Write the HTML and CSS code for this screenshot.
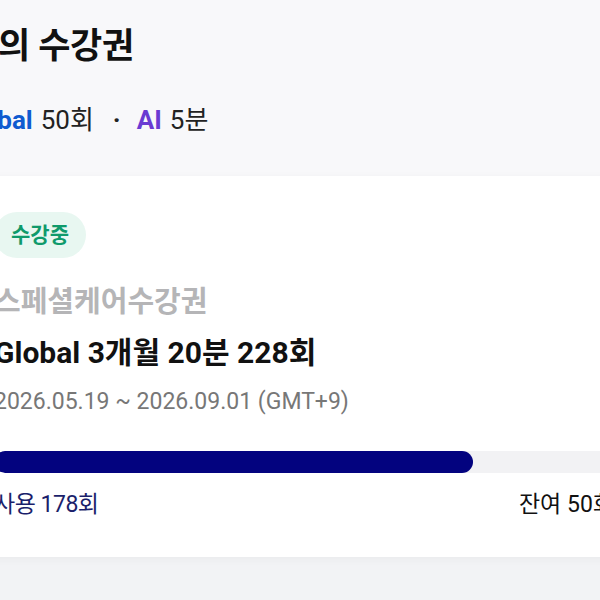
FILE: index.html
```html
<!DOCTYPE html>
<html lang="ko">
<head>
<meta charset="utf-8">
<link rel="stylesheet" href="styles.css">
</head>
<body>
<div class="page">
  <header class="head">
    <h1 class="title">나의 수강권</h1>
    <div class="summary">
      <span class="brand-global">Global</span>
      <span class="count">50회</span>
      <span class="dot">·</span>
      <span class="brand-ai">AI</span>
      <span class="count">5분</span>
    </div>
  </header>
  <section class="card">
    <span class="badge">수강중</span>
    <div class="category">스페셜케어수강권</div>
    <div class="name">Global 3개월 20분 228회</div>
    <div class="period">2026.05.19 ~ 2026.09.01 (GMT+9)</div>
    <div class="track"><div class="fill" style="width:77.2%"></div></div>
    <div class="usage">
      <span class="used">사용 178회</span>
      <span class="left">잔여 50회</span>
    </div>
  </section>
</div>
</body>
</html>
```

FILE: styles.css
```css
html, body {
  margin: 0;
  padding: 0;
  overflow: hidden;
  background: #f3f4f6;
}
body {
  font-family: Roboto, "Noto Sans CJK KR", sans-serif;
  color: #111;
  height: 600px;
}
.page {
  width: 676px;
  margin-left: -34px;
  background: linear-gradient(#f8f8fa, #f8f8fa 176px, #f2f3f5 176px);
  height: 600px;
}
.head {
  padding: 23px 0 0 0;
  height: 154px;
  box-sizing: border-box;
}
.title {
  margin: 0;
  font-size: 35px;
  font-weight: 700;
  line-height: 48px;
  letter-spacing: -0.3px;
}
.summary {
  margin-top: 32px;
  margin-left: -8px;
  display: flex;
  align-items: baseline;
  font-size: 26px;
  line-height: 34px;
  color: #222;
}
.brand-global { color: #0f5bd0; font-weight: 700; margin-right: 8px; }
.brand-ai { color: #6a3bd2; font-weight: 700; margin-right: 8px; }
.dot { margin: 0 16px 0 19px; font-weight: 700; }
.card {
  margin-top: 22px;
  background: #fff;
  border-radius: 16px;
  padding: 36px 28px 36px 28px;
  display: flex;
  flex-direction: column;
  align-items: flex-start;
  box-shadow: 0 2px 10px rgba(0,0,0,0.04);
  height: 381px;
  box-sizing: border-box;
}
.badge {
  background: #e8f7f1;
  color: #0f9a6b;
  font-size: 21px;
  font-weight: 700;
  line-height: 46px;
  padding: 0 17px;
  border-radius: 23px;
}
.category {
  margin-top: 25px;
  color: #b5b5b7;
  font-size: 29px;
  font-weight: 700;
  line-height: 38px;
}
.name {
  margin-top: 13px;
  font-size: 30px;
  font-weight: 700;
  line-height: 38px;
  color: #111;
}
.period {
  margin-top: 14px;
  font-size: 23px;
  line-height: 32px;
  color: #777;
}
.track {
  align-self: stretch;
  margin-top: 33px;
  height: 22px;
  border-radius: 11px;
  background: #f2f2f4;
  overflow: hidden;
}
.fill {
  height: 100%;
  background: #03037f;
  border-radius: 11px;
}
.usage {
  align-self: stretch;
  margin-top: 16px;
  display: flex;
  justify-content: space-between;
  font-size: 23px;
  line-height: 32px;
}
.used { color: #1b1f6b; letter-spacing: -0.5px; }
.left { color: #111; }
```
